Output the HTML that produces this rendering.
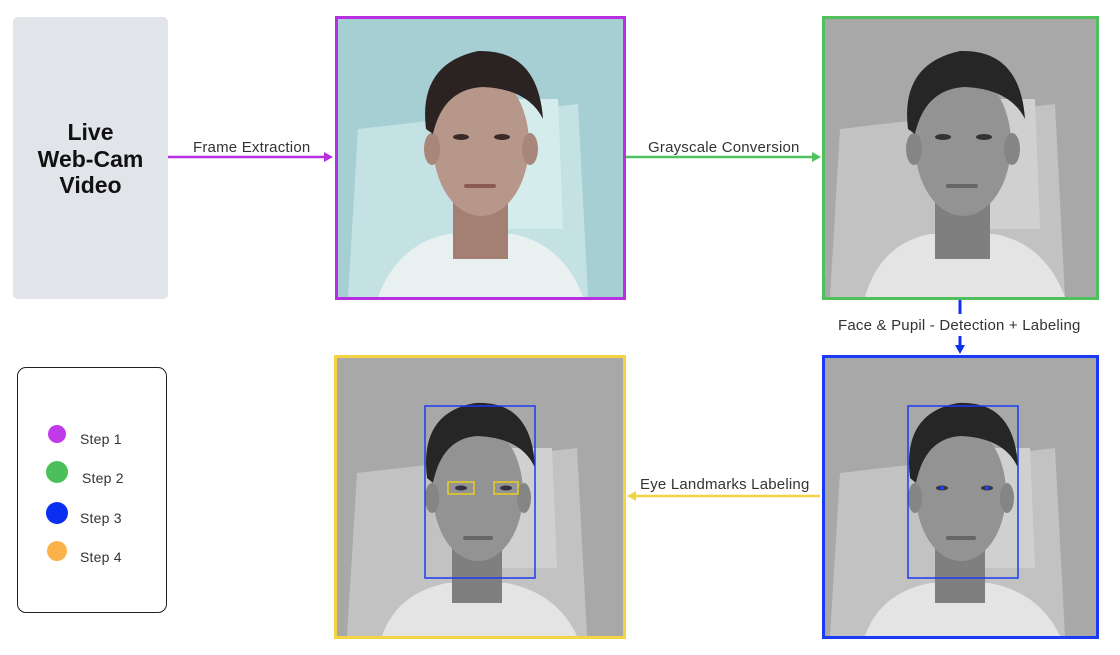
<!DOCTYPE html>
<html><head><meta charset="utf-8"><style>
body{margin:0;width:1120px;height:655px;background:#fff;position:relative;overflow:hidden;font-family:"Liberation Sans",sans-serif}
.abs{position:absolute}
.lbl{position:absolute;font-size:15px;color:#333;white-space:nowrap;letter-spacing:0.2px}
.frame{position:absolute;box-sizing:border-box;overflow:hidden}
.frame svg{display:block}
</style></head><body>
<div class="abs" style="left:13px;top:17px;width:155px;height:282px;background:#e1e4e8;border-radius:5px;"></div>
<div class="abs" style="left:13px;top:119px;width:155px;text-align:center;font-weight:bold;font-size:23px;line-height:26.5px;color:#111">Live<br>Web-Cam<br>Video</div>

<svg class="abs" style="left:0;top:0" width="1120" height="655">
<line x1="168" y1="157" x2="326" y2="157" stroke="#b52fe0" stroke-width="2.5"/>
<polygon points="333,157 324,152 324,162" fill="#b52fe0"/>
<line x1="626" y1="157" x2="814" y2="157" stroke="#50c060" stroke-width="2.5"/>
<polygon points="821,157 812,152 812,162" fill="#50c060"/>
<line x1="960" y1="300" x2="960" y2="314" stroke="#1030f0" stroke-width="3"/>
<line x1="960" y1="336" x2="960" y2="346" stroke="#1030f0" stroke-width="3"/>
<polygon points="960,354 955,345 965,345" fill="#1030f0"/>
<line x1="820" y1="496" x2="634" y2="496" stroke="#f5d443" stroke-width="2.5"/>
<polygon points="627,496 636,491 636,501" fill="#f5d443"/>
</svg>
<div class="lbl" style="left:193px;top:139px">Frame Extraction</div>
<div class="lbl" style="left:648px;top:139px">Grayscale Conversion</div>
<div class="lbl" style="left:838px;top:317px">Face &amp; Pupil - Detection + Labeling</div>
<div class="lbl" style="left:640px;top:476px">Eye Landmarks Labeling</div>

<div class="frame" style="left:335px;top:16px;width:291px;height:284px;border:3px solid #b62fe0">
<svg width="285" height="278" viewBox="0 0 285 278"><rect width="285" height="278" fill="#a6cfd3"/><polygon points="20,110 240,85 250,278 10,278" fill="#c4e2e4"/><polygon points="150,80 220,80 225,210 150,210" fill="#d4ecec"/>
<path d="M40,278 Q60,225 110,215 L175,215 Q225,225 245,278Z" fill="#e9f0f0"/><rect x="115" y="180" width="55" height="60" fill="#a48073"/>
<ellipse cx="143" cy="125" rx="48" ry="72" fill="#b8978b"/><ellipse cx="94" cy="130" rx="8" ry="16" fill="#a8877a"/><ellipse cx="192" cy="130" rx="8" ry="16" fill="#a8877a"/>
<path d="M88,110 Q80,45 140,32 Q200,30 205,100 Q190,70 145,68 Q105,70 95,115Z" fill="#2a2322"/>
<ellipse cx="123" cy="118" rx="8" ry="3" fill="#3a2a28"/><ellipse cx="164" cy="118" rx="8" ry="3" fill="#3a2a28"/><rect x="126" y="165" width="32" height="4" rx="2" fill="#8a5a55"/></svg></div>

<div class="frame" style="left:822px;top:16px;width:277px;height:284px;border:3px solid #4fc05b">
<svg width="271" height="278" viewBox="0 0 271 278"><rect width="271" height="278" fill="#a8a8a8"/><polygon points="15,110 230,85 240,278 5,278" fill="#c2c2c2"/><polygon points="140,80 210,80 215,210 140,210" fill="#d0d0d0"/>
<path d="M40,278 Q55,225 105,215 L170,215 Q220,225 240,278Z" fill="#e4e4e4"/><rect x="110" y="180" width="55" height="60" fill="#7f7f7f"/>
<ellipse cx="138" cy="125" rx="48" ry="72" fill="#939393"/><ellipse cx="89" cy="130" rx="8" ry="16" fill="#858585"/><ellipse cx="187" cy="130" rx="8" ry="16" fill="#858585"/>
<path d="M83,110 Q75,45 135,32 Q195,30 200,100 Q185,70 140,68 Q100,70 90,115Z" fill="#262626"/>
<ellipse cx="118" cy="118" rx="8" ry="3" fill="#333"/><ellipse cx="159" cy="118" rx="8" ry="3" fill="#333"/><rect x="121" y="165" width="32" height="4" rx="2" fill="#666"/></svg></div>

<div class="frame" style="left:334px;top:355px;width:292px;height:284px;border:3px solid #f5d443">
<svg width="286" height="278" viewBox="0 0 286 278"><rect width="286" height="278" fill="#a8a8a8"/><polygon points="20,115 240,90 250,278 10,278" fill="#c2c2c2"/><polygon points="150,90 215,90 220,210 150,210" fill="#d0d0d0"/>
<path d="M45,278 Q60,235 110,225 L170,225 Q220,235 240,278Z" fill="#e4e4e4"/><rect x="115" y="190" width="50" height="55" fill="#7f7f7f"/>
<ellipse cx="141" cy="135" rx="45" ry="68" fill="#939393"/><ellipse cx="95" cy="140" rx="7" ry="15" fill="#858585"/><ellipse cx="187" cy="140" rx="7" ry="15" fill="#858585"/>
<path d="M90,120 Q82,55 138,45 Q195,42 198,110 Q185,80 141,78 Q105,80 96,125Z" fill="#262626"/>
<rect x="88" y="48" width="110" height="172" fill="none" stroke="#1a3af5" stroke-width="1.5"/>
<rect x="111" y="124" width="26" height="12" fill="none" stroke="#e8d020" stroke-width="1.5"/><rect x="157" y="124" width="24" height="12" fill="none" stroke="#e8d020" stroke-width="1.5"/>
<ellipse cx="124" cy="130" rx="6" ry="2.5" fill="#334"/><ellipse cx="169" cy="130" rx="6" ry="2.5" fill="#334"/><rect x="126" y="178" width="30" height="4" rx="2" fill="#666"/></svg></div>

<div class="frame" style="left:822px;top:355px;width:277px;height:284px;border:3px solid #1a3af5">
<svg width="271" height="278" viewBox="0 0 271 278"><rect width="271" height="278" fill="#a8a8a8"/><polygon points="15,115 230,90 240,278 5,278" fill="#c2c2c2"/><polygon points="140,90 205,90 210,210 140,210" fill="#d0d0d0"/>
<path d="M40,278 Q55,235 105,225 L165,225 Q215,235 235,278Z" fill="#e4e4e4"/><rect x="110" y="190" width="50" height="55" fill="#7f7f7f"/>
<ellipse cx="136" cy="135" rx="45" ry="68" fill="#939393"/><ellipse cx="90" cy="140" rx="7" ry="15" fill="#858585"/><ellipse cx="182" cy="140" rx="7" ry="15" fill="#858585"/>
<path d="M85,120 Q77,55 133,45 Q190,42 193,110 Q180,80 136,78 Q100,80 91,125Z" fill="#262626"/>
<rect x="83" y="48" width="110" height="172" fill="none" stroke="#1a3af5" stroke-width="1.5"/>
<ellipse cx="117" cy="130" rx="6" ry="2.5" fill="#334"/><ellipse cx="162" cy="130" rx="6" ry="2.5" fill="#334"/><circle cx="117" cy="130" r="2" fill="#2040ff"/><circle cx="162" cy="130" r="2" fill="#2040ff"/><rect x="121" y="178" width="30" height="4" rx="2" fill="#666"/></svg></div>

<div class="abs" style="left:17px;top:367px;width:150px;height:246px;border:1px solid #222;border-radius:9px;box-sizing:border-box"></div>
<div class="abs" style="left:48px;top:425px;width:18px;height:18px;border-radius:50%;background:#c03ae8"></div>
<div class="abs" style="left:46px;top:461px;width:22px;height:22px;border-radius:50%;background:#4cbf5c"></div>
<div class="abs" style="left:46px;top:502px;width:22px;height:22px;border-radius:50%;background:#0a2ef2"></div>
<div class="abs" style="left:47px;top:541px;width:20px;height:20px;border-radius:50%;background:#fbb24a"></div>
<div class="lbl" style="left:80px;top:431px;font-size:14px">Step 1</div>
<div class="lbl" style="left:82px;top:470px;font-size:14px">Step 2</div>
<div class="lbl" style="left:80px;top:510px;font-size:14px">Step 3</div>
<div class="lbl" style="left:80px;top:549px;font-size:14px">Step 4</div>
</body></html>
